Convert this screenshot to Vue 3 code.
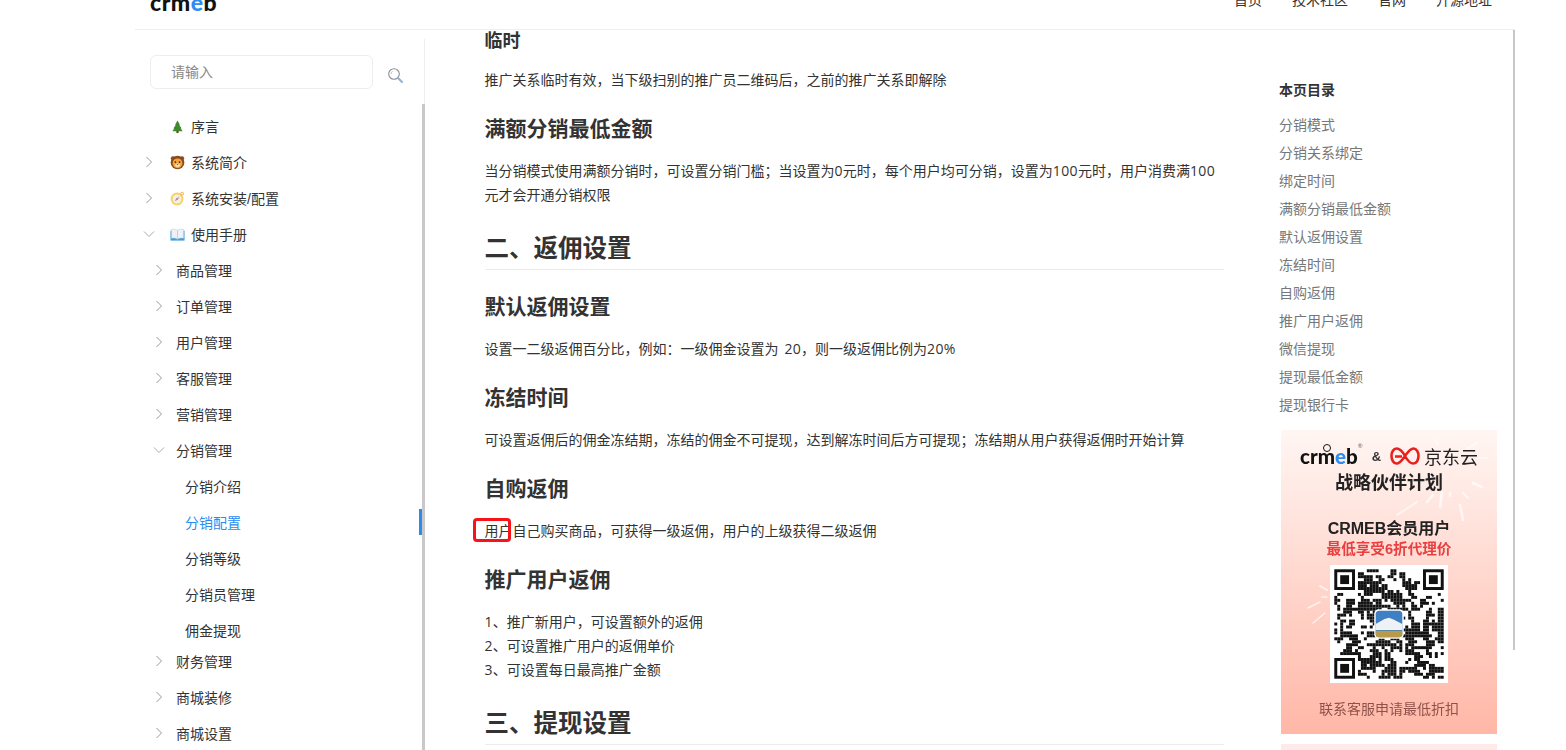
<script setup>
import { computed } from 'vue'

const tocItems = ['分销模式','分销关系绑定','绑定时间','满额分销最低金额','默认返佣设置','冻结时间','自购返佣','推广用户返佣','微信提现','提现最低金额','提现银行卡']
const navItems = ['首页','技术社区','官网','开源地址']
const level2Before = ['商品管理','订单管理','用户管理','客服管理','营销管理']
const level3 = ['分销介绍','分销配置','分销等级','分销员管理','佣金提现']
const level2After = ['财务管理','商城装修','商城设置']

const N = 37
const inFinder = (x, y) => (x < 8 && y < 8) || (x >= N - 8 && y < 8) || (x < 8 && y >= N - 8)
const modules = computed(() => {
  const out = []
  const on = []
  let s = 20240
  const rnd = () => { s = (s * 1103515245 + 12345) & 0x7fffffff; return (s >> 12) % 100 }
  for (let y = 0; y < N; y++) {
    for (let x = 0; x < N; x++) {
      const r = rnd()
      const left = x > 0 && on[y * N + x - 1]
      const up = y > 0 && on[(y - 1) * N + x]
      const v = r < 30 + (left ? 24 : 0) + (up ? 20 : 0)
      on[y * N + x] = v
      if (!inFinder(x, y) && v) out.push({ x, y })
    }
  }
  return out
})
const finders = [[0,0],[N-7,0],[0,N-7]]
</script>

<template>
  <div class="page">
    <div class="frame">
      <header class="topbar">
        <div class="logo">crm<span class="logo-e">e</span>b</div>
        <nav class="nav">
          <span v-for="n in navItems" :key="n">{{ n }}</span>
        </nav>
      </header>

      <div class="body">
        <aside class="side">
          <div class="search-row">
            <div class="search-box">请输入</div>
            <svg class="search-icon" viewBox="0 0 15 15" width="15" height="15">
              <circle cx="6" cy="6" r="5.300" fill="none" stroke="#8a8f98" stroke-width="1.100"/>
              <path d="M3 6a3 3 0 0 1 1.600-2.600" fill="none" stroke="#b5bac2" stroke-width="1"/>
              <path d="M10 10l4 4" stroke="#8fb0d6" stroke-width="2" stroke-linecap="round"/>
            </svg>
          </div>

          <ul class="tree">
            <li class="row lv1">
              <span class="arrow-slot"></span>
              <svg class="emoji" viewBox="0 0 16 16"><path d="M8 1.500l2.600 4.500H9.800l2.600 4h-1l2.100 3H2.500l2.100-3h-1l2.600-4H5.400z" fill="#3f8a2e"/><rect x="6.800" y="12.500" width="2.400" height="2.500" fill="#6b4a2a"/></svg>
              <span>序言</span>
            </li>
            <li class="row lv1">
              <svg class="arrow" viewBox="0 0 8 12"><path d="M1.500 1l5 5-5 5" /></svg>
              <svg class="emoji" viewBox="0 0 16 16"><circle cx="3.200" cy="3.500" r="2.300" fill="#8a4b1f"/><circle cx="12.800" cy="3.500" r="2.300" fill="#8a4b1f"/><circle cx="8" cy="8" r="7.300" fill="#8a4b1f"/><circle cx="8" cy="8.800" r="5.200" fill="#f5a53a"/><circle cx="5.800" cy="7.500" r=".9" fill="#3a2510"/><circle cx="10.200" cy="7.500" r=".9" fill="#3a2510"/><ellipse cx="8" cy="11" rx="2.600" ry="1.900" fill="#fbe3b8"/><path d="M7 9.800h2L8 11z" fill="#3a2510"/></svg>
              <span>系统简介</span>
            </li>
            <li class="row lv1">
              <svg class="arrow" viewBox="0 0 8 12"><path d="M1.500 1l5 5-5 5" /></svg>
              <svg class="emoji" viewBox="0 0 16 16"><circle cx="7.500" cy="8.500" r="6.800" fill="#fbcf5f"/><circle cx="7.500" cy="8.500" r="4.800" fill="#f6efe4"/><path d="M10.200 5.800L8.400 9.400 4.800 11.200l1.800-3.600z" fill="#c9a0a8"/><circle cx="7.500" cy="8.500" r=".8" fill="#888"/><circle cx="13" cy="2.800" r="1.500" fill="none" stroke="#f0a93a" stroke-width="1"/></svg>
              <span>系统安装/配置</span>
            </li>
            <li class="row lv1">
              <svg class="arrow open" viewBox="0 0 12 8"><path d="M1 1.500l5 5 5-5" /></svg>
              <svg class="emoji" viewBox="0 0 16 16"><path d="M.5 4h15v10.500H.5z" fill="#3f9fe0"/><path d="M1.500 2.500C4 2 6.500 2.500 8 3.500v9.500C6.500 12 4 11.500 1.500 12z" fill="#eef1f6" stroke="#b9c4d2" stroke-width=".5"/><path d="M14.500 2.500C12 2 9.500 2.500 8 3.500v9.500c1.500-1 4-1.500 6.500-1z" fill="#eef1f6" stroke="#b9c4d2" stroke-width=".5"/></svg>
              <span>使用手册</span>
            </li>
            <li v-for="t in level2Before" :key="t" class="row lv2">
              <svg class="arrow" viewBox="0 0 8 12"><path d="M1.500 1l5 5-5 5" /></svg>
              <span>{{ t }}</span>
            </li>
            <li class="row lv2">
              <svg class="arrow open" viewBox="0 0 12 8"><path d="M1 1.500l5 5 5-5" /></svg>
              <span>分销管理</span>
            </li>
            <li v-for="t in level3" :key="t" class="row lv3" :class="{ active: t === '分销配置' }">{{ t }}</li>
            <li v-for="t in level2After" :key="t" class="row lv2 after">
              <svg class="arrow" viewBox="0 0 8 12"><path d="M1.500 1l5 5-5 5" /></svg>
              <span>{{ t }}</span>
            </li>
          </ul>
          <div class="side-thumb"></div>
        </aside>

        <main class="doc">
          <h4>临时</h4>
          <p class="p1">推广关系临时有效，当下级扫别的推广员二维码后，之前的推广关系即解除</p>
          <h3>满额分销最低金额</h3>
          <p>当分销模式使用满额分销时，可设置分销门槛；当设置为<span class="num">0</span>元时，每个用户均可分销，设置为<span class="num">100</span>元时，用户消费满<span class="num">100</span>元才会开通分销权限</p>
          <h2>二、返佣设置</h2>
          <h3 class="first">默认返佣设置</h3>
          <p>设置一二级返佣百分比，例如：一级佣金设置为 <span class="num gap">20</span>，则一级返佣比例为<span class="num">20%</span></p>
          <h3>冻结时间</h3>
          <p>可设置返佣后的佣金冻结期，冻结的佣金不可提现，达到解冻时间后方可提现；冻结期从用户获得返佣时开始计算</p>
          <h3>自购返佣</h3>
          <p><span class="marked">用户</span>自己购买商品，可获得一级返佣，用户的上级获得二级返佣</p>
          <h3>推广用户返佣</h3>
          <p><span class="num">1</span>、推广新用户，可设置额外的返佣<br><span class="num">2</span>、可设置推广用户的返佣单价<br><span class="num">3</span>、可设置每日最高推广金额</p>
          <h2>三、提现设置</h2>
        </main>

        <aside class="toc">
          <div class="toc-title">本页目录</div>
          <div v-for="t in tocItems" :key="t" class="toc-item">{{ t }}</div>

          <div class="banner">
            <svg class="sparks" viewBox="0 0 216 304">
              <g stroke="#fff" stroke-linecap="round" fill="none" opacity=".7">
                <path d="M116 85l20-13" stroke-width="1.500"/><path d="M159 77l2-15" stroke-width="2.500"/><path d="M182 90l-3-15" stroke-width="2.500"/>
                <path d="M187 68l-5-5" stroke-width="2"/><path d="M201 57l-9-4" stroke-width="2.500"/><path d="M146 72l6-7" stroke-width="2.500"/>
                <path d="M206 28h-10" stroke-width="1.500"/><path d="M196 13l-9 5" stroke-width="2"/><path d="M169 63v3" stroke-width="2"/><path d="M154 10l3 5" stroke-width="1.500"/>
                <path d="M32 193l12-10" stroke-width="1.500"/><path d="M27 178l12-6" stroke-width="1.500"/><path d="M39 156l7 4" stroke-width="2"/><path d="M41 167h5" stroke-width="1.500"/>
              </g>
            </svg>
            <div class="b-logos">
              <span class="b-crmeb">c<span class="b-r">r</span><span class="b-m">m</span><span class="logo-e">e</span>b<sup class="b-reg">®</sup></span>
              <span class="b-amp">&amp;</span>
              <svg class="jd" viewBox="0 0 30 18" width="30" height="18"><path d="M15 9C12 3.500 9 1.500 6.500 1.500 3.500 1.500 1.500 5 1.500 9s2 7.500 5 7.500c3.500 0 6-4 8.500-7.500s5-7.500 8.500-7.500c3 0 5 3.500 5 7.500s-2 7.500-5 7.500c-2.500 0-5.500-2-8.500-7.500M5 9.500h7" fill="none" stroke="#e8211d" stroke-width="2.600"/></svg>
              <span class="b-jd">京东云</span>
            </div>
            <div class="b-plan">战略伙伴计划</div>
            <div class="b-member">CRMEB会员用户</div>
            <div class="b-price">最低享受6折代理价</div>
            <div class="qr">
              <svg viewBox="-1.450 -1.450 39.900 39.900" width="118" height="118">
                <rect v-for="(m, i) in modules" :key="i" :x="m.x" :y="m.y" width="1" height="1" fill="#111"/>
                <g v-for="(f, i) in finders" :key="'f' + i">
                  <rect :x="f[0] + .5" :y="f[1] + .5" width="6" height="6" fill="none" stroke="#111" stroke-width="1"/>
                  <rect :x="f[0] + 2" :y="f[1] + 2" width="3" height="3" fill="#111"/>
                </g>
                <rect x="13.500" y="13.500" width="10" height="10" rx="1.500" fill="#fff"/>
                <rect x="14" y="14" width="9" height="9" rx="1.200" fill="#3f7fc4"/>
                <path d="M14 18.500l3-1.700 1.500-.4 1.500.6 3 1.500v2H14z" fill="#eef2f5"/>
                <path d="M14 20.800h9V22a1 1 0 0 1-1 1h-7a1 1 0 0 1-1-1z" fill="#b79a4a"/>
              </svg>
            </div>
            <div class="b-foot">联系客服申请最低折扣</div>
          </div>
          <div class="banner2"></div>
        </aside>
      </div>
      <div class="page-thumb"></div>
    </div>
  </div>
</template>

<style>
html, body { margin: 0; overflow: hidden; background: #fff; }
</style>

<style scoped>
* { box-sizing: border-box; }
.page {
  width: 1566px; height: 750px; overflow: hidden; background: #fff;
  padding-left: 135px;
  font-family: "Liberation Sans", "Noto Sans CJK SC", sans-serif;
  font-size: 14px; color: #333;
}
.frame { position: relative; width: 1380px; height: 750px; }
.topbar {
  height: 30px; border-bottom: 1px solid #eee; overflow: hidden;
  display: flex; justify-content: space-between; align-items: flex-end;
  padding: 0 23px 18px 15px;
}
.logo {
  font-family: "Lato", sans-serif; font-weight: 900; font-size: 23px; line-height: 20px;
  color: #111; letter-spacing: .5px; margin-bottom: -1px;
}
.logo-e { color: #2f8cf0; }
.nav { display: flex; gap: 30px; line-height: 22px; color: #333; }
.body { display: flex; height: 720px; }

.side { position: relative; width: 290px; margin-top: 9px; border-right: 1px solid #eee; flex: none; }
.search-row { display: flex; align-items: flex-start; padding: 16px 0 0 15px; }
.search-box {
  width: 223px; height: 34px; border: 1px solid #eee; border-radius: 6px;
  line-height: 32px; padding-left: 20px; color: #888;
}
.search-icon { margin: 13px 0 0 15px; }
.tree { list-style: none; margin: 19px 0 0; padding: 0; }
.row { height: 36px; display: flex; align-items: center; color: #333; }
.lv1 { padding-left: 10px; }
.lv2 { padding-left: 20px; }
.lv3 { padding-left: 50px; }
.lv3.active { color: #2b8cf0; position: relative; }
.lv3.active::after {
  content: ""; position: absolute; right: 2px; top: 5px; width: 3px; height: 26px; background: #2b8cf0;
}
.lv3 + .after { margin-top: -5px; }
.arrow { width: 8px; height: 12px; flex: none; fill: none; stroke: #999; stroke-width: 1; margin-right: 17px; }
.arrow.open { width: 12px; height: 8px; margin-left: -2px; margin-right: 15px; stroke: #aaa; }
.lv2 .arrow { margin-right: 13px; }
.lv2 .arrow.open { margin-left: -2px; margin-right: 11px; }
.arrow-slot { width: 25px; flex: none; }
.emoji { width: 15px; height: 15px; margin-right: 6px; flex: none; }
.side-thumb { position: absolute; right: -1px; top: 65px; width: 3px; height: 650px; background: #c8c8c8; }

.doc { width: 739.500px; margin-left: 59.500px; flex: none; line-height: 24px; color: #333; }
.doc h4 { margin: 0; font-size: 18px; line-height: 22px; font-weight: 700; }
.doc p { margin: 14px 0 0; }
.doc p.p1 { margin-top: 16px; }
.doc h3 { margin: 21px 0 0; font-size: 21px; line-height: 32px; font-weight: 700; }
.doc h2 {
  margin: 24px 0 0; font-size: 24.500px; line-height: 36px; font-weight: 700;
  padding-bottom: 2px; border-bottom: 1px solid #eaecef;
}
.num { font-family: "Open Sans", sans-serif; letter-spacing: .35px; }
.gap { margin-left: 2px; }
.marked { position: relative; display: inline-block; }
.marked::after {
  content: ""; position: absolute; left: -11.500px; right: 1.500px; top: -1px; bottom: 1px;
  border: 3px solid #f5141a; border-radius: 4px;
}

.toc { margin-left: 55px; width: 218px; padding-top: 46px; flex: none; }
.toc-title { font-weight: 700; line-height: 28px; color: #333; margin-bottom: 7px; }
.toc-item { line-height: 28px; color: #777; }
.banner {
  position: relative; margin: 11px 0 0 2px; width: 216px; height: 304px;
  background: linear-gradient(#fff6f3, #ffb7a7);
  display: flex; flex-direction: column; align-items: center;
  padding-top: 14px; overflow: hidden;
}
.sparks { position: absolute; inset: 0; width: 216px; height: 304px; }
.b-logos { position: relative; display: flex; align-items: center; height: 24px; filter: blur(.3px); }
.b-crmeb { position: relative; font-family: "Lato", sans-serif; font-weight: 900; font-size: 20.500px; line-height: 24px; color: #111; }
.b-m { position: relative; }
.b-m::before {
  content: ""; position: absolute; left: 5.500px; top: 0; width: 6px; height: 6px;
  border: 1.500px solid #111; border-radius: 50%;
}
.b-reg { position: absolute; right: -5px; top: -2px; font-size: 6px; line-height: 8px; font-weight: 400; color: #666; }
.b-amp { font-weight: 700; font-size: 13px; margin: 0 9px 0 14px; color: #333; }
.b-jd { font-size: 18px; margin-left: 4px; color: #222; }
.b-plan { position: relative; font-size: 18px; font-weight: 700; line-height: 24px; margin-top: 3px; color: #222; filter: blur(.3px); }
.b-member { position: relative; font-size: 16px; font-weight: 700; line-height: 22px; margin-top: 23px; color: #222; filter: blur(.3px); }
.b-price { position: relative; font-size: 14.600px; font-weight: 700; line-height: 20px; margin-top: -1px; color: #ea3f3f; filter: blur(.3px); }
.qr { position: relative; width: 118px; height: 118px; margin-top: 6px; background: #fff; filter: blur(.4px); }
.qr svg { display: block; }
.b-foot { position: relative; line-height: 20px; margin-top: 16px; color: #8f5149; filter: blur(.3px); }
.banner2 { margin: 10px 0 0 2px; width: 216px; height: 40px; background: #ffeaea; }
.page-thumb { position: absolute; right: 0; top: 30px; width: 2px; height: 620px; background: #c8c8c8; }
</style>
